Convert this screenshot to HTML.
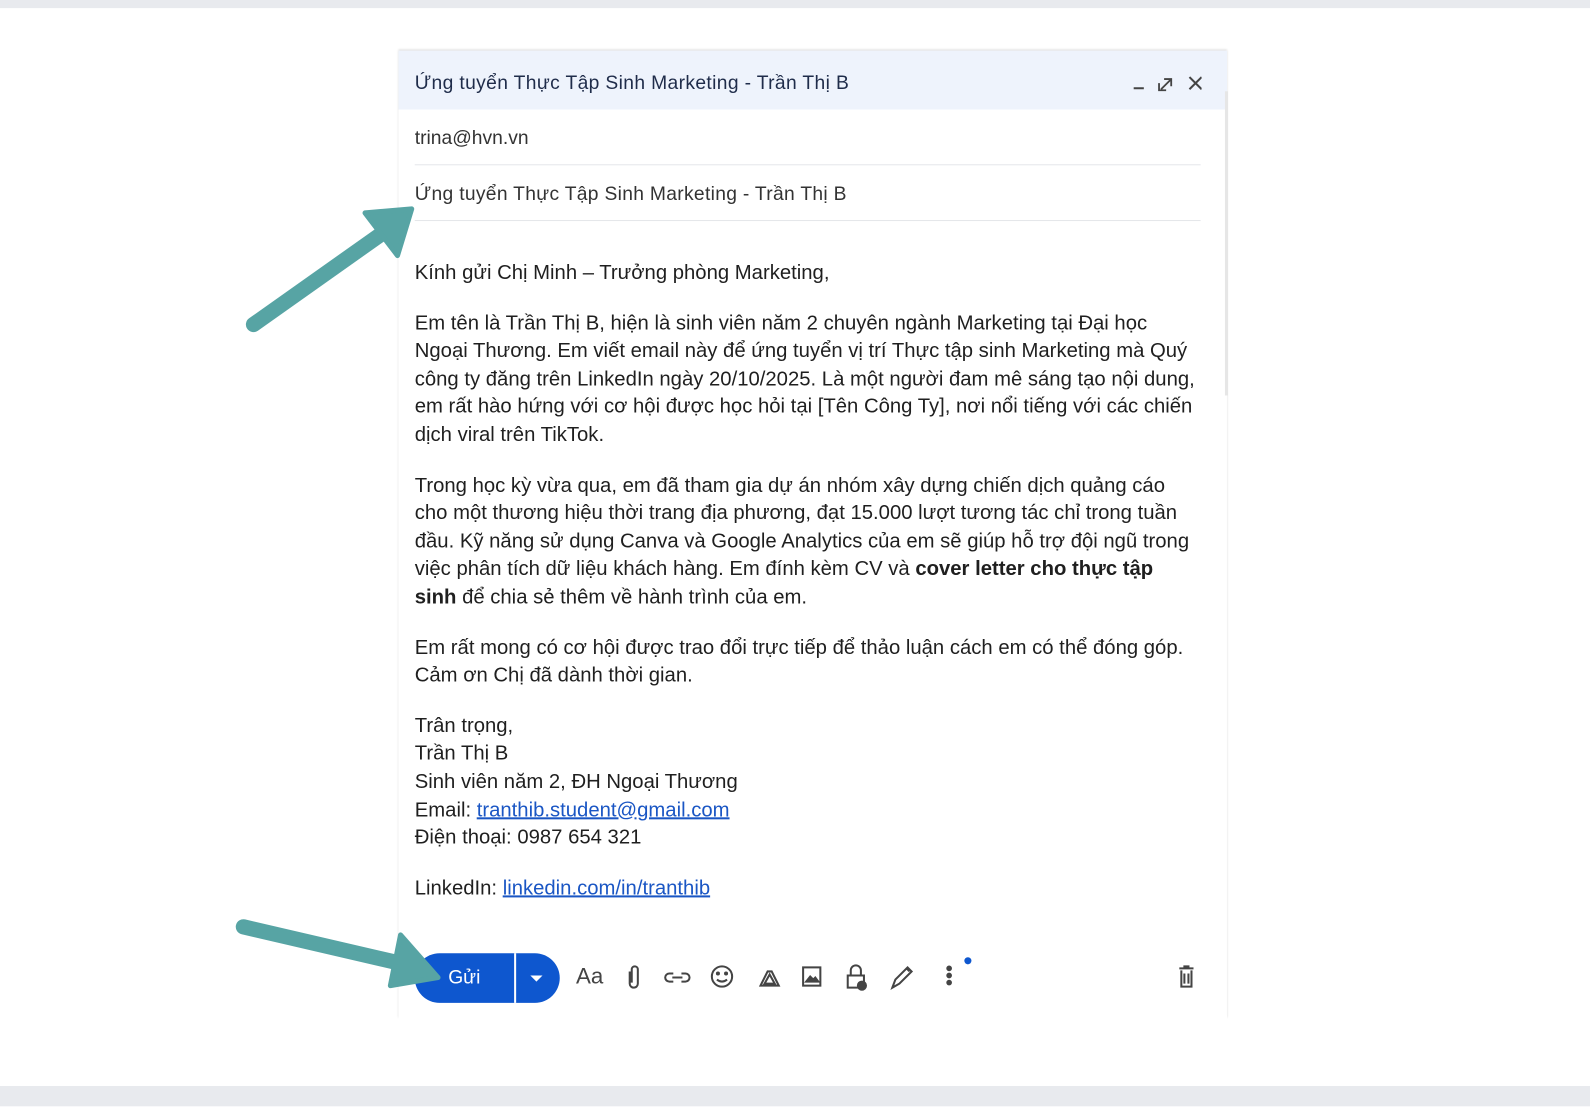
<!DOCTYPE html>
<html><head><meta charset="utf-8"><style>
body{margin:0;width:1590px;height:1092px;background:#fff;position:relative;overflow:hidden;font-family:"Liberation Sans",Arial,sans-serif;}
#w{position:absolute;left:0;top:0;width:1568px;height:1077px;transform:scale(1.01403);transform-origin:0 0}
.band{position:absolute;left:0;width:1600px;background:#e8eaee}
.panel{position:absolute;left:393px;top:50px;width:817px;height:955px;background:#fff;box-shadow:0 -1px 2px rgba(0,0,0,.15)}
.hdr{position:absolute;left:0;top:0;width:817px;height:58px;background:#eef3fc;}
.hdr span{position:absolute;left:16px;top:22px;font-size:19px;color:#1f2c4a;letter-spacing:0.35px}
.row{position:absolute;left:16px;width:775px;height:54px;border-bottom:1px solid #e4e6ea;font-size:19px;color:#333}
.body{position:absolute;left:409px;top:256px;width:800px;font-size:20px;line-height:27.6px;color:#1f1f1f;white-space:nowrap}
.body p{margin:0 0 22px}
a{color:#1a56c4}
.send{position:absolute;left:409px;top:940px;width:143px;height:49px;background:#0e57cf;border-radius:25px;color:#fff}
.ic{position:absolute;top:950px}
</style></head><body>
<div id="w">
<div class="band" style="top:0;height:8px"></div>
<div class="band" style="top:1071px;height:20px"></div>
<div class="panel">
 <div class="hdr"><span>Ứng tuyển Thực Tập Sinh Marketing - Trần Thị B</span>
  <svg style="position:absolute;left:722px;top:22px" width="70" height="20" viewBox="0 0 70 20" fill="none" stroke="#444" stroke-width="2"><path d="M3 15h10"/><path d="M30 16l10-10M33 6h7v7M28 10v7h7" stroke-width="1.8"/><path d="M58 4l12 12M70 4L58 16"/></svg>
 </div>
 <div class="row" style="top:58px"><span style="position:absolute;top:18px">trina@hvn.vn</span></div>
 <div class="row" style="top:113px"><span style="position:absolute;top:18px;letter-spacing:0.3px">Ứng tuyển Thực Tập Sinh Marketing - Trần Thị B</span></div>
 <div style="position:absolute;left:815px;top:40px;width:3px;height:300px;background:#e6e6e6"></div>
</div>
<div class="body">
<p>Kính gửi Chị Minh – Trưởng phòng Marketing,</p>
<p>Em tên là Trần Thị B, hiện là sinh viên năm 2 chuyên ngành Marketing tại Đại học<br>Ngoại Thương. Em viết email này để ứng tuyển vị trí Thực tập sinh Marketing mà Quý<br>công ty đăng trên LinkedIn ngày 20/10/2025. Là một người đam mê sáng tạo nội dung,<br>em rất hào hứng với cơ hội được học hỏi tại [Tên Công Ty], nơi nổi tiếng với các chiến<br>dịch viral trên TikTok.</p>
<p>Trong học kỳ vừa qua, em đã tham gia dự án nhóm xây dựng chiến dịch quảng cáo<br>cho một thương hiệu thời trang địa phương, đạt 15.000 lượt tương tác chỉ trong tuần<br>đầu. Kỹ năng sử dụng Canva và Google Analytics của em sẽ giúp hỗ trợ đội ngũ trong<br>việc phân tích dữ liệu khách hàng. Em đính kèm CV và <b>cover letter cho thực tập<br>sinh</b> để chia sẻ thêm về hành trình của em.</p>
<p>Em rất mong có cơ hội được trao đổi trực tiếp để thảo luận cách em có thể đóng góp.<br>Cảm ơn Chị đã dành thời gian.</p>
<p>Trân trọng,<br>Trần Thị B<br>Sinh viên năm 2, ĐH Ngoại Thương<br>Email: <a href="#">tranthib.student@gmail.com</a><br>Điện thoại: 0987 654 321</p>
<p>LinkedIn: <a href="#">linkedin.com/in/tranthib</a></p>
</div>
<div class="send"><span style="position:absolute;left:33px;top:14px;font-size:19px">Gửi</span><div style="position:absolute;left:98px;top:0;width:2px;height:49px;background:#fff"></div><div style="position:absolute;left:114px;top:22px;border-left:6px solid transparent;border-right:6px solid transparent;border-top:6px solid #fff"></div></div>
<span style="position:absolute;left:568px;top:950px;font-size:22px;color:#444">Aa</span>
<svg class="ic" style="left:612px" width="580" height="30" viewBox="0 0 580 30" fill="none" stroke="#444" stroke-width="2">
<path d="M9 8v12a4 4 0 0 0 8 0V6a3 3 0 0 0-6 0v13"/>
<path d="M52 10h-4a4 4 0 0 0 0 8h4M60 10h4a4 4 0 0 1 0 8h-4M51 14h10"/>
<circle cx="100" cy="13" r="10"/><circle cx="96" cy="10" r="1" fill="#444"/><circle cx="104" cy="10" r="1" fill="#444"/><path d="M95 16q5 4 10 0"/>
<path d="M138 22l7-14h4l7 14z M142 20l5-9 5 9z"/>
<rect x="180" y="4" width="17" height="18"/><path d="M183 18l4-5 3 3 2-2 3 4z" fill="#444"/>
<path d="M227 12V7a5 5 0 0 1 10 0v5M224 12h16v12h-16z"/><circle cx="238" cy="22" r="4" fill="#444"/>
<path d="M268 24l3-8 12-12 4 4-12 12z M282 5l3 3"/>
<circle cx="324" cy="5" r="1.8" fill="#444"/><circle cx="324" cy="12" r="1.8" fill="#444"/><circle cx="324" cy="19" r="1.8" fill="#444"/>
<path d="M551 5h14M556 5V3h4v2M553 7v16h10V7M556 10v10M560 10v10"/>
</svg>
<div style="position:absolute;left:951px;top:944px;width:7px;height:7px;border-radius:50%;background:#0e57cf"></div>
<svg style="position:absolute;left:0;top:0" width="1590" height="1092" fill="#57a4a4" stroke="#57a4a4" stroke-linecap="round" stroke-linejoin="round">
<path d="M250 320L380 228" stroke-width="15" fill="none"/><path d="M360 210L406 206 392 252z" stroke-width="5"/>
<path d="M240 914L395 950" stroke-width="15" fill="none"/><path d="M395 922L432 964 385 972z" stroke-width="5"/>
</svg>
</div>
</body></html>
